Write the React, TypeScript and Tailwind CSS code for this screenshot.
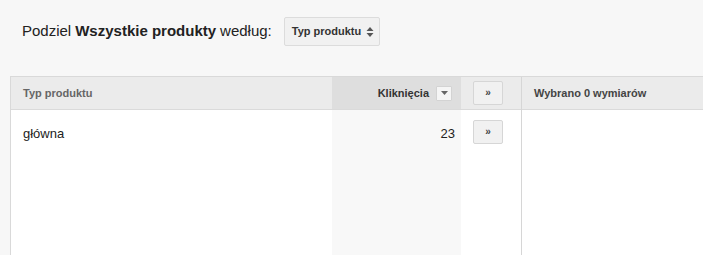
const ArrowButton = () => (
  <div className="flex h-[24px] w-[30px] items-center justify-center rounded-[2px] border border-[#d6d6d6] bg-[#f1f1f1] text-[10px] font-bold leading-none text-[#444]">
    »
  </div>
);

const App = () => {
  return (
    <div
      className="h-[255px] w-[703px] overflow-hidden bg-[#f7f7f7] text-[#222]"
      style={{ fontFamily: '"Liberation Sans", Arial, sans-serif' }}
    >
      <div className="flex h-[76px] items-start pl-[22px] pt-[17px]">
        <div className="flex h-[29px] items-center text-[15px]">
          <span>Podziel</span>
          <span className="ml-[4px] font-bold">Wszystkie produkty</span>
          <span className="ml-[4px]">według:</span>
        </div>
        <div className="ml-[12px] flex h-[29px] items-center rounded-[2px] border border-[#dcdcdc] bg-[#f1f1f1] pl-[7px] pr-[5px] text-[11px] font-bold text-[#333]">
          Typ produktu
          <svg width="8" height="12" viewBox="0 0 8 12" className="ml-[5px]">
            <path d="M4 1 L7.5 5 H0.5 Z" fill="#555" />
            <path d="M4 11 L7.5 7 H0.5 Z" fill="#555" />
          </svg>
        </div>
      </div>

      <div className="ml-[10px] flex h-[179px] border-l border-t border-[#d9d9d9]">
        <div className="flex w-[321px] flex-col bg-white">
          <div className="flex h-[33px] items-center border-b border-[#dadada] bg-[#ebebeb] pl-[12px] text-[11px] font-bold text-[#666]">
            Typ produktu
          </div>
          <div className="pl-[12px] pt-[14px] text-[13px] text-[#222]">główna</div>
        </div>

        <div className="flex w-[129px] flex-col bg-[#f8f8f8]">
          <div className="flex h-[33px] items-center justify-end border-b border-[#dadada] bg-[#dedede] pr-[9px] text-[11px] font-bold text-[#333]">
            Kliknięcia
            <div className="ml-[7px] flex h-[15px] w-[16px] items-center justify-center rounded-[1px] border border-[#d3d3d3] bg-[#f5f5f5]">
              <svg width="7" height="4" viewBox="0 0 7 4">
                <path d="M0 0 H7 L3.5 4 Z" fill="#666" />
              </svg>
            </div>
          </div>
          <div className="pr-[6px] pt-[14px] text-right text-[13px] text-[#222]">23</div>
        </div>

        <div className="flex w-[61px] flex-col border-r border-[#d6d6d6] bg-white">
          <div className="flex h-[33px] items-center border-b border-[#dadada] bg-[#ebebeb] pl-[12px]">
            <ArrowButton />
          </div>
          <div className="pl-[12px] pt-[10px]">
            <ArrowButton />
          </div>
        </div>

        <div className="flex flex-1 flex-col bg-white">
          <div className="flex h-[33px] items-center border-b border-[#dadada] bg-[#ebebeb] pl-[12px] text-[11px] font-bold text-[#444]">
            Wybrano 0 wymiarów
          </div>
        </div>
      </div>
    </div>
  );
};

export default App;
